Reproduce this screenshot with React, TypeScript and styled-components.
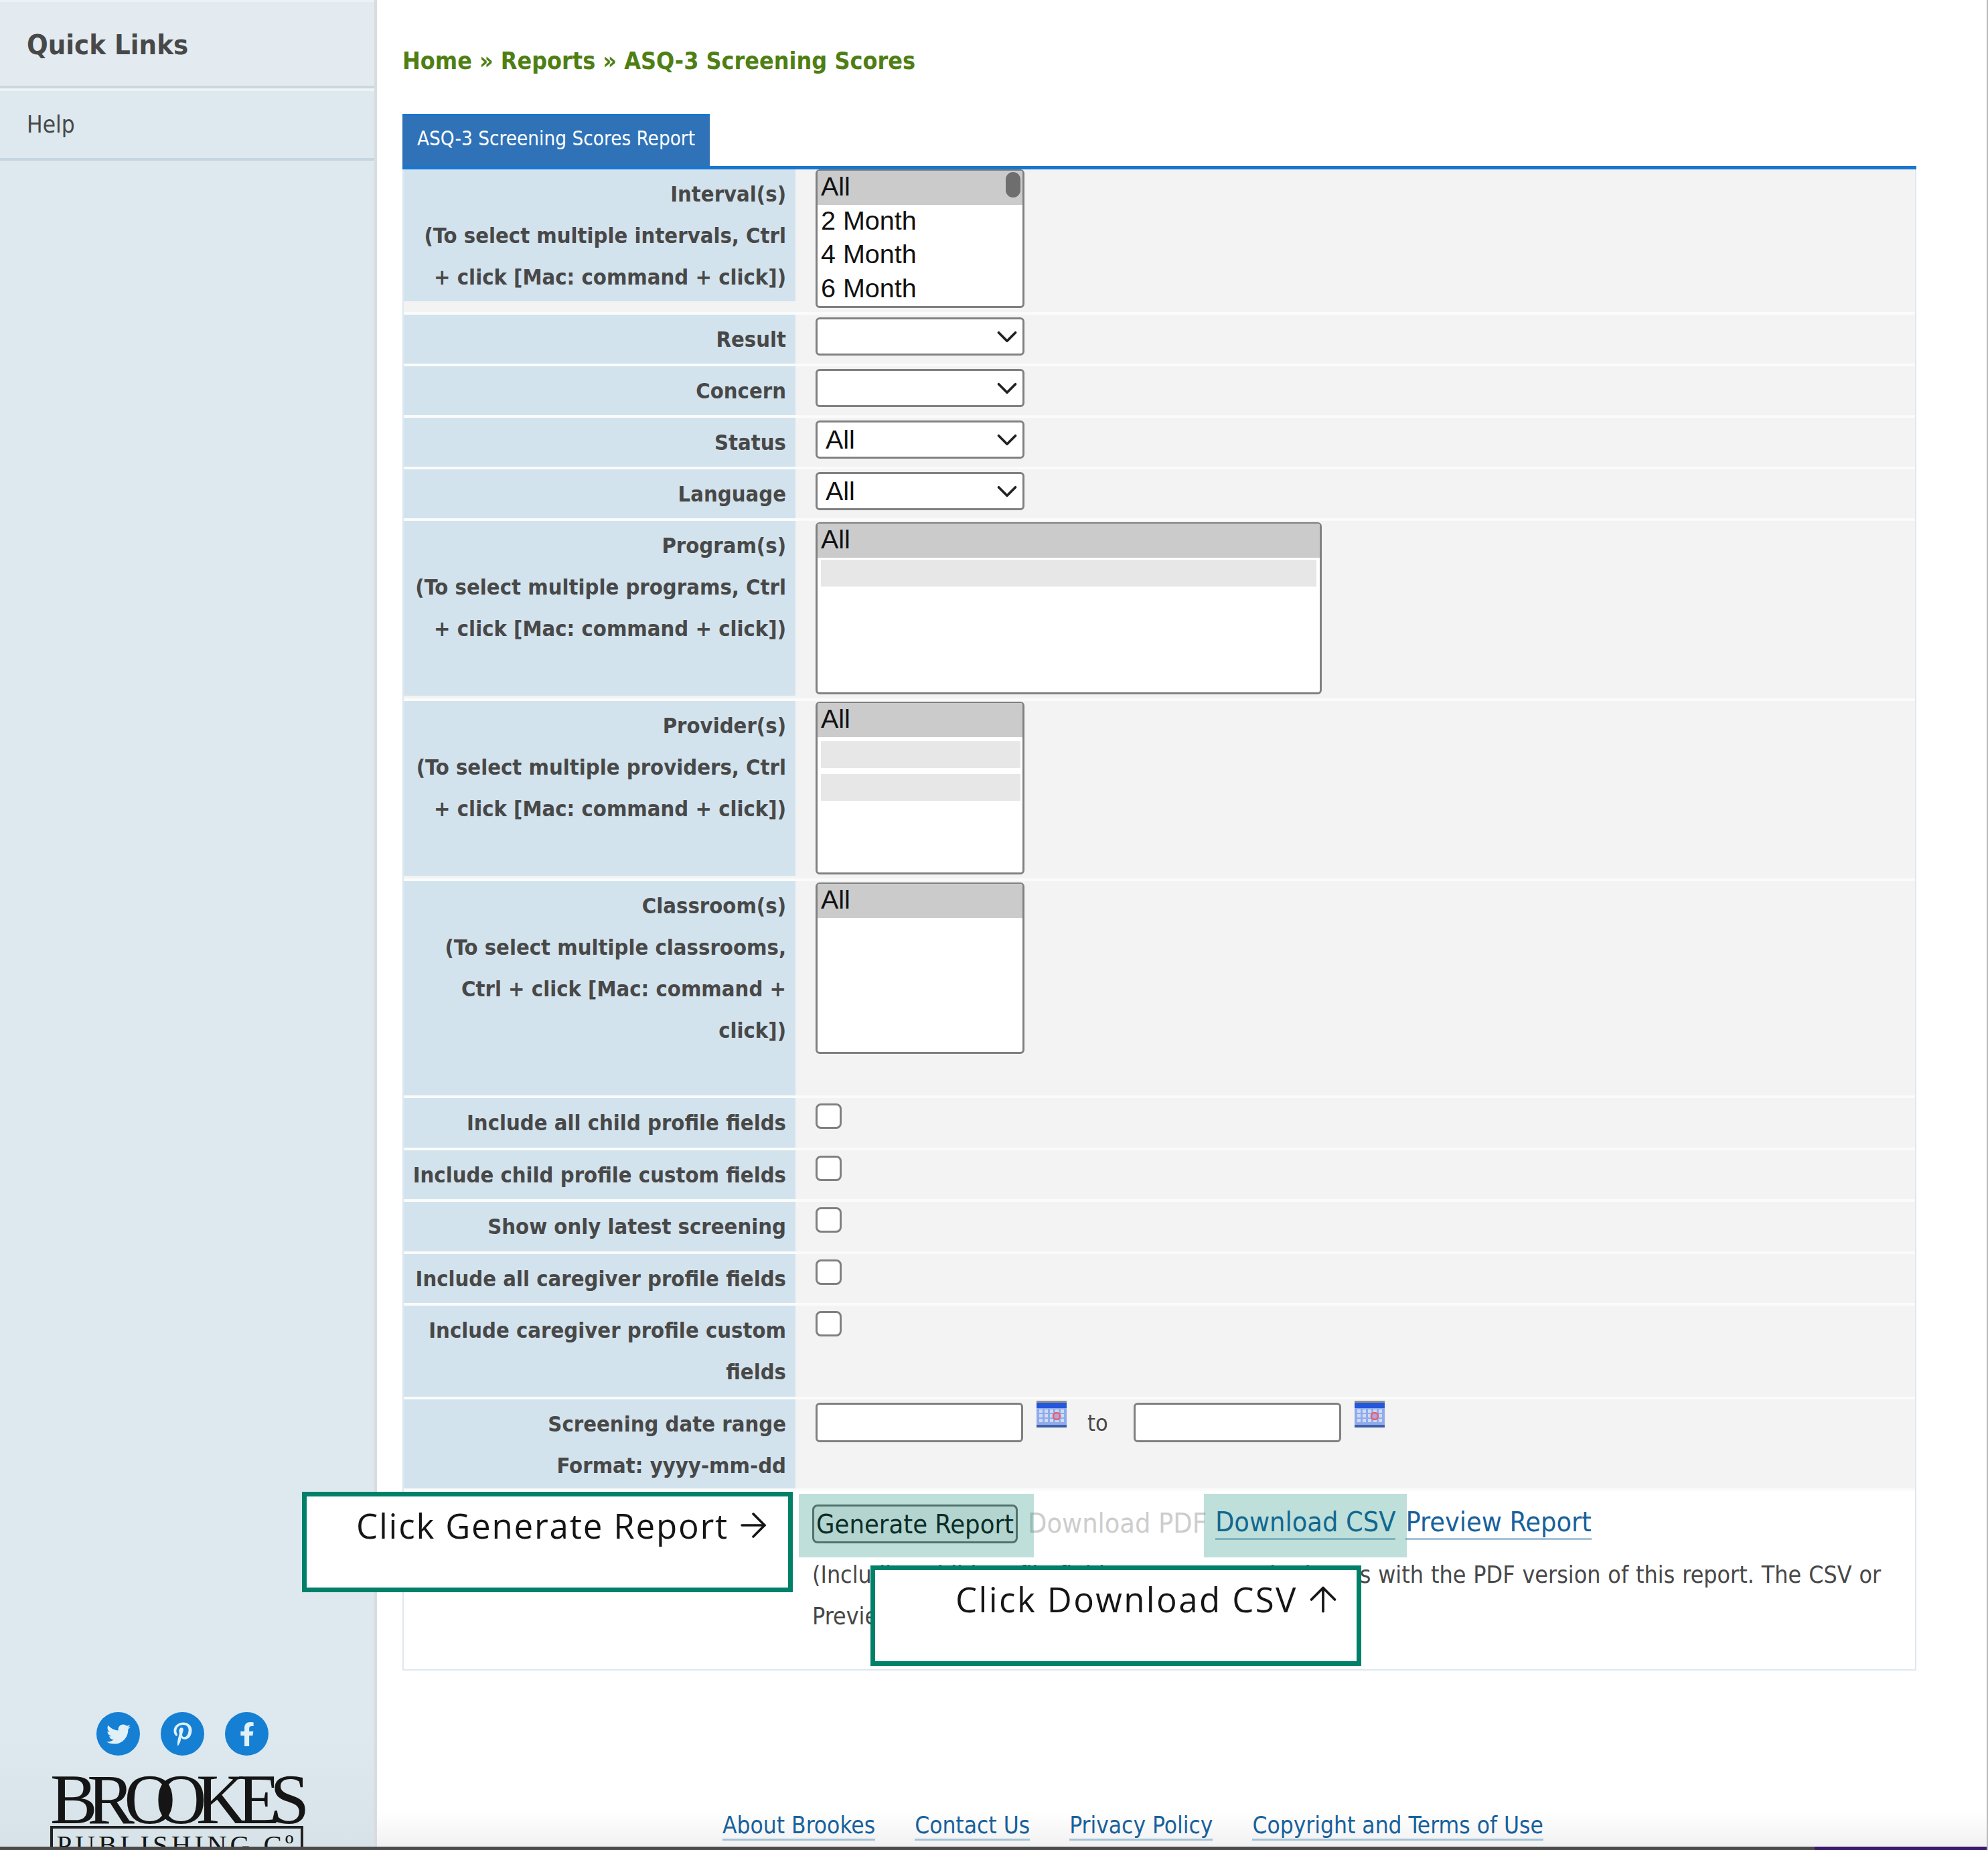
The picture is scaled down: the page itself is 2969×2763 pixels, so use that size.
import React from "react";
import styled, { createGlobalStyle } from "styled-components";
import { ArrowRight, ArrowUp, ChevronDown } from "lucide-react";
import { FaTwitter, FaPinterestP, FaFacebookF } from "react-icons/fa";

const GlobalStyle = createGlobalStyle`
  html, body {
    margin: 0;
    padding: 0;
    background: #ffffff;
  }
  * {
    box-sizing: border-box;
  }
`;

const uiFont = `"DejaVu Sans Condensed", "DejaVu Sans", sans-serif`;
const formFont = `"Liberation Sans", Arial, sans-serif`;

const Page = styled.div`
  position: relative;
  width: 2969px;
  height: 2763px;
  overflow: hidden;
  display: flex;
  flex-direction: column;
  font-family: ${uiFont};
  font-stretch: condensed;
  color: #484848;
  background: #ffffff;
  border-right: 2px solid #b9b9b9;
`;

const Body = styled.div`
  flex: 1;
  min-height: 0;
  display: flex;
`;

const BottomStrip = styled.div`
  height: 5px;
  flex: none;
  background: linear-gradient(90deg, #4b4b4b 0, #4b4b4b 2710px, #3a1a6b 2710px);
`;

const Sidebar = styled.aside`
  width: 563px;
  flex: none;
  display: flex;
  flex-direction: column;
  overflow: hidden;
  background: linear-gradient(#dde9ee 0, #dde9ee 94%, #d7e3e8 100%);
  border-right: 4px solid #d8dcde;
`;

const QuickHead = styled.div`
  height: 132px;
  padding: 2px 0 0 40px;
  display: flex;
  align-items: center;
  font-size: 41.5px;
  font-weight: 700;
  background: #e3ebf1;
  border-top: 3px solid #eef2f5;
  border-bottom: 4px solid #c9d8e2;
`;

const SideLink = styled.div`
  height: 108px;
  padding: 0 0 0 40px;
  display: flex;
  align-items: center;
  font-size: 35px;
  border-top: 4px solid #eef4f6;
  border-bottom: 4px solid #c5d6e2;
`;

const Socials = styled.div`
  margin-top: auto;
  padding-left: 144px;
  display: flex;
  gap: 31px;
`;

const SocialIcon = styled.span`
  width: 65px;
  height: 65px;
  border-radius: 50%;
  display: flex;
  align-items: center;
  justify-content: center;
  color: #dff0f7;
  font-size: 36px;
  background: #157fd4;
`;

const Logo = styled.div`
  margin: 26px 0 0 75px;
  width: 378px;
  height: 110px;
  flex: none;
  color: #151515;
  font-family: "Liberation Serif", "Times New Roman", serif;
  font-stretch: normal;
`;

const LogoWord = styled.div`
  height: 79px;
  font-size: 106px;
  line-height: 79px;
  letter-spacing: -15.5px;
  white-space: nowrap;
`;

const LogoO = styled.span`
  letter-spacing: -30px;
`;

const LogoPlate = styled.div`
  height: 60px;
  padding-top: 4px;
  border: 4px solid #222222;
  font-size: 41px;
  line-height: 40px;
  text-align: center;
  letter-spacing: 5px;
  white-space: nowrap;
`;

const Main = styled.main`
  flex: 1;
  min-width: 0;
  display: flex;
  flex-direction: column;
`;

const Content = styled.div`
  padding: 60px 105px 0 38px;
`;

const Breadcrumb = styled.div`
  height: 62px;
  margin-bottom: 48px;
  color: #4f7f14;
  font-size: 35.6px;
  font-weight: 700;
  line-height: 62px;
  white-space: nowrap;
`;

const TabBar = styled.div`
  display: flex;
  border-bottom: 5px solid #1976cc;
`;

const Tab = styled.div`
  width: 459px;
  height: 78px;
  padding: 0 0 8px 22px;
  display: flex;
  align-items: center;
  color: #ffffff;
  font-size: 29.4px;
  background: #2f72b8;
  border-top: 3px solid #1976cc;
  white-space: nowrap;
`;

const Panel = styled.div`
  height: 2242px;
  border: 2px solid #dce8f1;
  border-top: 0;
`;

const Row = styled.div`
  display: grid;
  grid-template-columns: 585px 1fr;
  background: #f3f3f3;
  border-bottom: 4px solid #fafbfb;
`;

const Label = styled.div<{ $tail?: number }>`
  align-self: start;
  padding: 6px 14px ${(p) => p.$tail ?? 5}px 0;
  background: #d3e3ed;
  font-size: 32.5px;
  font-weight: 700;
  line-height: 62px;
  text-align: right;
  white-space: nowrap;
`;

const Field = styled.div<{ $top?: number; $bottom?: number }>`
  padding: ${(p) => p.$top ?? 4}px 0 ${(p) => p.$bottom ?? 6}px 30px;
`;

const ListBox = styled.div<{ $wide?: boolean; $height: number }>`
  position: relative;
  width: ${(p) => (p.$wide ? 756 : 312)}px;
  height: ${(p) => p.$height}px;
  overflow: hidden;
  background: #ffffff;
  border: 3px solid #808080;
  border-top-width: 2px;
  border-radius: 6px;
  color: #111111;
  font-family: ${formFont};
  font-stretch: normal;
  font-size: 39.5px;
  line-height: 46px;
`;

const Option = styled.div<{ $selected?: boolean }>`
  height: 50.5px;
  padding-left: 5px;
  background: ${(p) => (p.$selected ? "#cbcbcb" : "transparent")};
`;

const HiddenOption = styled.div<{ $gap: number; $right: number }>`
  height: 40px;
  margin: ${(p) => p.$gap}px ${(p) => p.$right}px 0 5px;
  background: #e7e7e7;
`;

const ScrollThumb = styled.div`
  position: absolute;
  top: 2px;
  right: 3px;
  width: 22px;
  height: 38px;
  border-radius: 11px;
  background: #6e6e6e;
`;

const SelectBox = styled.div`
  width: 312px;
  height: 57px;
  padding: 0 0 0 12px;
  display: flex;
  align-items: center;
  justify-content: space-between;
  overflow: hidden;
  background: #ffffff;
  border: 3px solid #808080;
  border-radius: 6px;
  color: #111111;
  font-family: ${formFont};
  font-stretch: normal;
  font-size: 39.5px;
`;

const Chevron = styled(ChevronDown)`
  flex: none;
  margin-left: auto;
  margin-right: -2px;
`;

const Check = styled.input.attrs({ type: "checkbox" })`
  display: block;
  appearance: none;
  width: 39px;
  height: 38px;
  margin: 0;
  background: #ffffff;
  border: 3px solid #808080;
  border-radius: 8px;
`;

const DateRow = styled.div`
  display: flex;
  align-items: flex-start;
`;

const DateInput = styled.input.attrs({ type: "text" })`
  display: block;
  width: 310px;
  height: 59px;
  margin: 3px 20px 0 0;
  padding: 0;
  background: #ffffff;
  border: 3px solid #808080;
  border-radius: 6px;
`;

const To = styled.span`
  margin: 0 38px 0 31px;
  padding-top: 8px;
  font-size: 34px;
  line-height: 50px;
`;

const Calendar = () => (
  <svg width="45" height="40" viewBox="0 0 45 40">
    <rect width="45" height="40" fill="#5f7fc8" />
    <rect width="45" height="3" fill="#8e8e8e" />
    <rect y="3" width="45" height="8" fill="#2458dc" />
    <rect y="11" width="45" height="25" fill="#8fabea" />
    <g fill="#cddbf8">
      {[0, 1, 2, 3, 4].map((c) =>
        [0, 1, 2].map((r) => <rect key={`${c}-${r}`} x={4 + c * 8} y={13 + r * 7} width="5" height="5" />)
      )}
    </g>
    <circle cx="30" cy="23" r="5" fill="#b9a4d8" stroke="#e2606f" strokeWidth="2.5" />
    <rect y="36" width="45" height="4" fill="#3e5fa8" />
  </svg>
);

const ActionRow = styled.div`
  height: 94px;
  padding: 20px 0 0 610px;
  display: flex;
  align-items: flex-start;
  white-space: nowrap;
`;

const GenerateButton = styled.button`
  width: 307px;
  height: 58px;
  margin-right: 15px;
  padding: 0;
  color: #111111;
  font-family: ${uiFont};
  font-stretch: condensed;
  font-size: 39.5px;
  line-height: 48px;
  background: #f0f0f0;
  border: 3px solid #6d6d6d;
  border-radius: 8px;
`;

const DisabledLink = styled.span`
  margin: 3px 13px 0 0;
  color: #cdcdcd;
  font-size: 41px;
  line-height: 50px;
`;

const Link = styled.a<{ $size?: number; $after?: number; $drop?: number }>`
  margin: ${(p) => p.$drop ?? 0}px ${(p) => p.$after ?? 0}px 0 0;
  color: #17619c;
  font-size: ${(p) => p.$size ?? 41}px;
  line-height: 1.15;
  text-decoration: none;
  border-bottom: 3px solid #a6c4d8;
`;

const Note = styled.div`
  padding: 0 30px 0 610px;
  font-size: 35.5px;
  word-spacing: 0.8px;
  line-height: 62px;
  white-space: nowrap;
`;

const Footer = styled.footer`
  margin-top: auto;
  height: 51px;
  padding-left: 516px;
  display: flex;
  align-items: flex-end;
  background: linear-gradient(#ffffff, #f1f1f1);
`;

const FooterLinks = styled.div`
  display: flex;
  gap: 59px;
  padding-bottom: 9px;
  white-space: nowrap;
`;

const Highlight = styled.div<{ $left: number; $width: number }>`
  position: absolute;
  top: 2231px;
  left: ${(p) => p.$left}px;
  width: ${(p) => p.$width}px;
  height: 95px;
  background: rgba(0, 128, 106, 0.25);
`;

const Callout = styled.div<{ $left: number; $top: number; $pad: number; $track: number }>`
  position: absolute;
  left: ${(p) => p.$left}px;
  top: ${(p) => p.$top}px;
  width: 733px;
  height: 150px;
  padding: 9px 0 0 ${(p) => p.$pad}px;
  display: flex;
  align-items: flex-start;
  gap: 8px;
  color: #151515;
  font-family: "Open Sans", sans-serif;
  font-stretch: normal;
  font-size: 51px;
  letter-spacing: ${(p) => p.$track}px;
  line-height: 68px;
  white-space: nowrap;
  background: #ffffff;
  border: 7px solid #008069;
`;

const CalloutIcon = styled.span`
  display: flex;
  margin-top: 5px;
`;

const App = () => (
  <>
    <GlobalStyle />
    <Page>
      <Body>
        <Sidebar>
          <QuickHead>Quick Links</QuickHead>
          <SideLink>Help</SideLink>
          <Socials>
            <SocialIcon><FaTwitter /></SocialIcon>
            <SocialIcon><FaPinterestP /></SocialIcon>
            <SocialIcon><FaFacebookF /></SocialIcon>
          </Socials>
          <Logo>
            <LogoWord>BR<LogoO>O</LogoO>OKES</LogoWord>
            <LogoPlate>PUBLISHING Cº</LogoPlate>
          </Logo>
        </Sidebar>
        <Main>
          <Content>
            <Breadcrumb>Home » Reports » ASQ-3 Screening Scores</Breadcrumb>
            <TabBar>
              <Tab>ASQ-3 Screening Scores Report</Tab>
            </TabBar>
            <Panel>
              <Row>
                <Label>
                  Interval(s)<br />
                  (To select multiple intervals, Ctrl<br />
                  + click [Mac: command + click])
                </Label>
                <Field $top={0}>
                  <ListBox $height={207}>
                    <Option $selected>All</Option>
                    <Option>2 Month</Option>
                    <Option>4 Month</Option>
                    <Option>6 Month</Option>
                    <ScrollThumb />
                  </ListBox>
                </Field>
              </Row>
              {["Result", "Concern", "Status", "Language"].map((name) => (
                <Row key={name}>
                  <Label>{name}</Label>
                  <Field>
                    <SelectBox>
                      {name === "Status" || name === "Language" ? "All" : ""}
                      <Chevron size={50} strokeWidth={1.8} color="#222222" />
                    </SelectBox>
                  </Field>
                </Row>
              ))}
              <Row>
                <Label $tail={69}>
                  Program(s)<br />
                  (To select multiple programs, Ctrl<br />
                  + click [Mac: command + click])
                </Label>
                <Field $top={2}>
                  <ListBox $wide $height={257}>
                    <Option $selected>All</Option>
                    <HiddenOption $gap={3} $right={5} />
                  </ListBox>
                </Field>
              </Row>
              <Row>
                <Label $tail={69}>
                  Provider(s)<br />
                  (To select multiple providers, Ctrl<br />
                  + click [Mac: command + click])
                </Label>
                <Field $top={1}>
                  <ListBox $height={258}>
                    <Option $selected>All</Option>
                    <HiddenOption $gap={6} $right={3} />
                    <HiddenOption $gap={9} $right={3} />
                  </ListBox>
                </Field>
              </Row>
              <Row>
                <Label $tail={66}>
                  Classroom(s)<br />
                  (To select multiple classrooms,<br />
                  Ctrl + click [Mac: command +<br />
                  click])
                </Label>
                <Field $top={2}>
                  <ListBox $height={256}>
                    <Option $selected>All</Option>
                  </ListBox>
                </Field>
              </Row>
              {[
                "Include all child profile fields",
                "Include child profile custom fields",
                "Show only latest screening",
                "Include all caregiver profile fields",
              ].map((name) => (
                <Row key={name}>
                  <Label $tail={5.5}>{name}</Label>
                  <Field $top={8}>
                    <Check />
                  </Field>
                </Row>
              ))}
              <Row>
                <Label $tail={5.5}>
                  Include caregiver profile custom<br />
                  fields
                </Label>
                <Field $top={8}>
                  <Check />
                </Field>
              </Row>
              <Row>
                <Label $tail={3.5}>
                  Screening date range<br />
                  Format: yyyy-mm-dd
                </Label>
                <Field $top={2}>
                  <DateRow>
                    <DateInput />
                    <Calendar />
                    <To>to</To>
                    <DateInput />
                    <Calendar />
                  </DateRow>
                </Field>
              </Row>
              <ActionRow>
                <GenerateButton>Generate Report</GenerateButton>
                <DisabledLink>Download PDF</DisabledLink>
                <Link href="#" $after={15} $drop={3}>Download CSV</Link>
                <Link href="#" $drop={3}>Preview Report</Link>
              </ActionRow>
              <Note>
                (Including child profile fields may cause print issues with the PDF version of this report. The CSV or<br />
                Preview Report is recommended.
              </Note>
            </Panel>
          </Content>
          <Footer>
            <FooterLinks>
              <Link href="#" $size={35}>About Brookes</Link>
              <Link href="#" $size={35}>Contact Us</Link>
              <Link href="#" $size={35}>Privacy Policy</Link>
              <Link href="#" $size={35}>Copyright and Terms of Use</Link>
            </FooterLinks>
          </Footer>
        </Main>
      </Body>
      <BottomStrip />
      <Highlight $left={1193} $width={351} />
      <Highlight $left={1798} $width={303} />
      <Callout $left={451} $top={2228} $pad={74} $track={1.8}>
        Click Generate Report
        <CalloutIcon><ArrowRight size={58} strokeWidth={1.5} /></CalloutIcon>
      </Callout>
      <Callout $left={1300} $top={2338} $pad={120} $track={2.4}>
        Click Download CSV
        <CalloutIcon><ArrowUp size={60} strokeWidth={1.5} /></CalloutIcon>
      </Callout>
    </Page>
  </>
);

export default App;
